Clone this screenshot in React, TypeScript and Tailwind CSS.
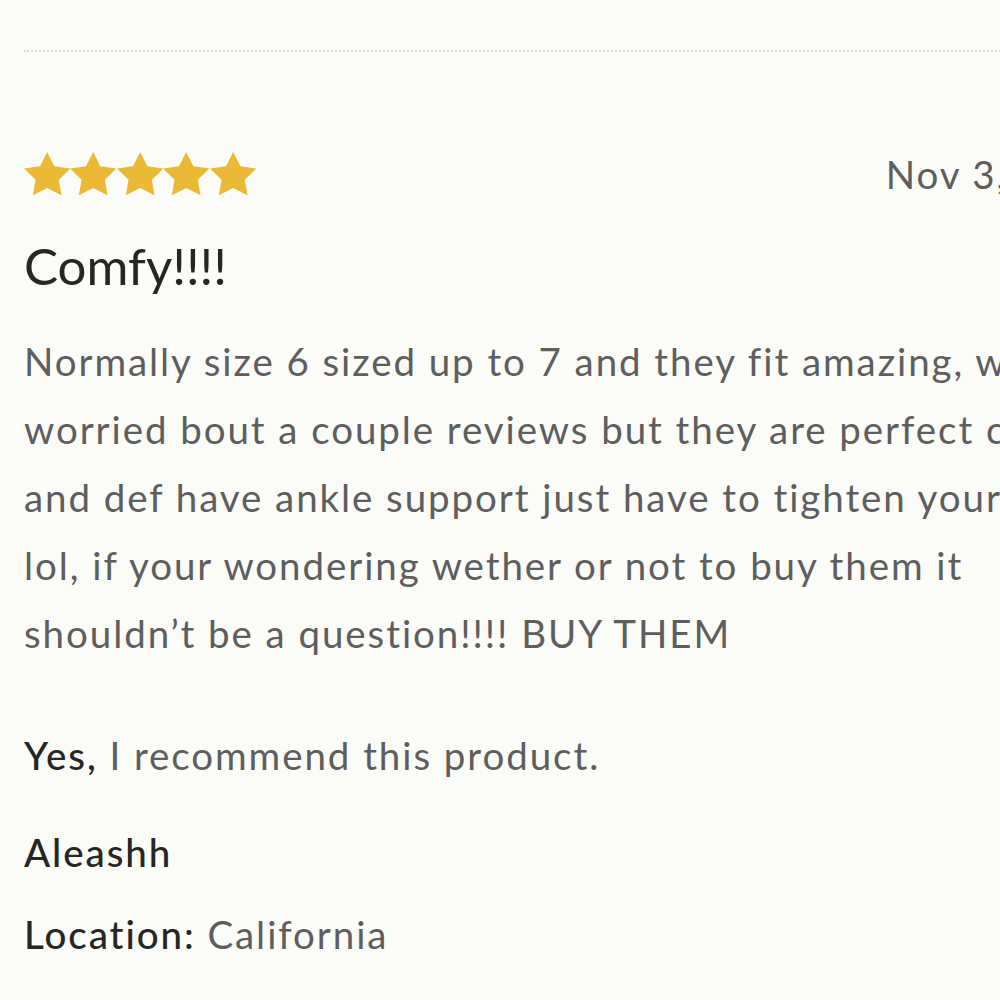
import React from 'react'

const font = { fontFamily: 'Lato, "Noto Sans", sans-serif' }

function Stars({ count = 5 }: { count?: number }) {
  return (
    <div className="flex">
      {Array.from({ length: count }).map((_, i) => (
        <svg key={i} width="46.4" height="44" viewBox="2 2 20 19.3" preserveAspectRatio="none">
          <polygon
            fill="#ebb934"
            points="12,2 15.09,8.26 22,9.27 17,14.14 18.18,21.02 12,17.77 5.82,21.02 7,14.14 2,9.27 8.91,8.26"
          />
        </svg>
      ))}
    </div>
  )
}

export default function App() {
  return (
    <div className="w-[1000px] min-h-screen overflow-hidden bg-[#fbfbf7] pt-[50px]" style={font}>
      <div className="ml-[24px] w-[1120px]">
        {/* divider */}
        <div className="border-t-2 border-dotted border-[#dcdcd8]" />

        {/* rating + date */}
        <div className="mt-[100px] flex w-[1092px] items-center justify-between">
          <Stars />
          <span className="text-[38.5px] leading-[44px] tracking-[0.05em] text-[#5e5e5e] whitespace-nowrap">
            Nov 3, 2023
          </span>
        </div>

        <h2 className="mt-[44px] text-[51px] leading-none text-[#262626]">Comfy!!!!</h2>

        <div className="tracking-[0.05em] text-[38.5px] leading-[68px]">
          <p className="mt-[36px] text-[#5e5e5e] whitespace-nowrap">
            Normally size 6 sized up to 7 and they fit amazing, was
            <br />
            worried bout a couple reviews but they are perfect comfy
            <br />
            and def have ankle support just have to tighten your laces
            <br />
            lol, if your wondering wether or not to buy them it
            <br />
            shouldn’t be a question!!!! BUY THEM
          </p>

          <p className="mt-[54px] text-[#5e5e5e]">
            <span className="font-medium text-[#262626]">Yes,</span> I recommend this product.
          </p>

          <p className="mt-[29px] font-medium text-[#262626]">Aleashh</p>

          <p className="mt-[14px] text-[#5e5e5e]">
            <span className="font-medium text-[#262626]">Location:</span> California
          </p>
        </div>
      </div>
    </div>
  )
}
